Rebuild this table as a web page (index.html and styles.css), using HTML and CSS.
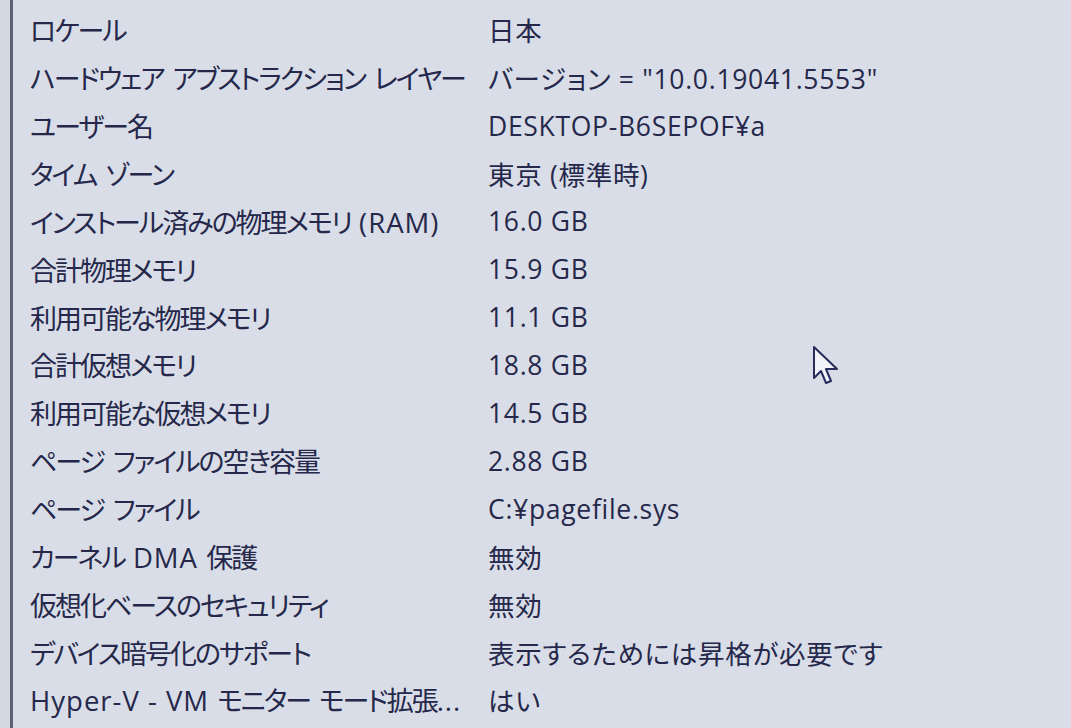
FILE: index.html
```html
<!DOCTYPE html>
<html lang="ja">
<head>
<meta charset="utf-8">
<link rel="stylesheet" href="styles.css">
</head>
<body>
<div class="frame">
  <div class="table">
    <div class="row"><span class="k">ロケール</span><span class="v">日本</span></div>
    <div class="row"><span class="k">ハードウェア アブストラクション レイヤー</span><span class="v">バージョン = "10.0.19041.5553"</span></div>
    <div class="row"><span class="k">ユーザー名</span><span class="v">DESKTOP-B6SEPOF¥a</span></div>
    <div class="row"><span class="k">タイム ゾーン</span><span class="v">東京 (標準時)</span></div>
    <div class="row"><span class="k">インストール済みの物理メモリ<span class="en"> (RAM)</span></span><span class="v">16.0 GB</span></div>
    <div class="row"><span class="k">合計物理メモリ</span><span class="v">15.9 GB</span></div>
    <div class="row"><span class="k">利用可能な物理メモリ</span><span class="v">11.1 GB</span></div>
    <div class="row"><span class="k">合計仮想メモリ</span><span class="v">18.8 GB</span></div>
    <div class="row"><span class="k">利用可能な仮想メモリ</span><span class="v">14.5 GB</span></div>
    <div class="row"><span class="k">ページ ファイルの空き容量</span><span class="v">2.88 GB</span></div>
    <div class="row"><span class="k">ページ ファイル</span><span class="v">C:¥pagefile.sys</span></div>
    <div class="row"><span class="k">カーネル<span class="en"> DMA </span>保護</span><span class="v">無効</span></div>
    <div class="row"><span class="k">仮想化ベースのセキュリティ</span><span class="v">無効</span></div>
    <div class="row"><span class="k">デバイス暗号化のサポート</span><span class="v">表示するためには昇格が必要です</span></div>
    <div class="row"><span class="k"><span class="en">Hyper-V - VM </span>モニター モード拡張<span class="en">...</span></span><span class="v">はい</span></div>
  </div>
  <svg class="cursor" width="28" height="42" viewBox="0 0 28 42">
    <path d="M2 2 L2 33 L9 26 L14 38 L19 36 L14 24 L25 24 Z" fill="#f1f3f8" stroke="#262c5c" stroke-width="2" stroke-linejoin="round"/>
  </svg>
</div>
</body>
</html>
```
FILE: styles.css
```css
html, body {
  margin: 0;
  padding: 0;
}
body {
  width: 1071px;
  height: 728px;
  overflow: hidden;
  background: #d3d7e0;
  font-family: "Open Sans", "Noto Sans CJK JP", sans-serif;
}
.frame {
  position: relative;
  margin-left: 10px;
  height: 728px;
  border-left: 3px solid #5c6274;
  background: #d9dde7;
}
.table {
  display: flex;
  flex-direction: column;
  padding-top: 6px;
}
.row {
  display: grid;
  grid-template-columns: 458px 1fr;
  height: 47.86px;
  align-items: center;
  padding-left: 17px;
  color: #25284a;
  white-space: nowrap;
  font-feature-settings: "palt";
}
.k {
  font-size: 27px;
  letter-spacing: -2px;
  word-spacing: 4px;
}
.k .en {
  font-size: 27.5px;
  letter-spacing: 1px;
  word-spacing: 0;
}
.v {
  font-size: 26.5px;
  letter-spacing: 0.7px;
}
.cursor {
  position: absolute;
  left: 799px;
  top: 345px;
}
```
